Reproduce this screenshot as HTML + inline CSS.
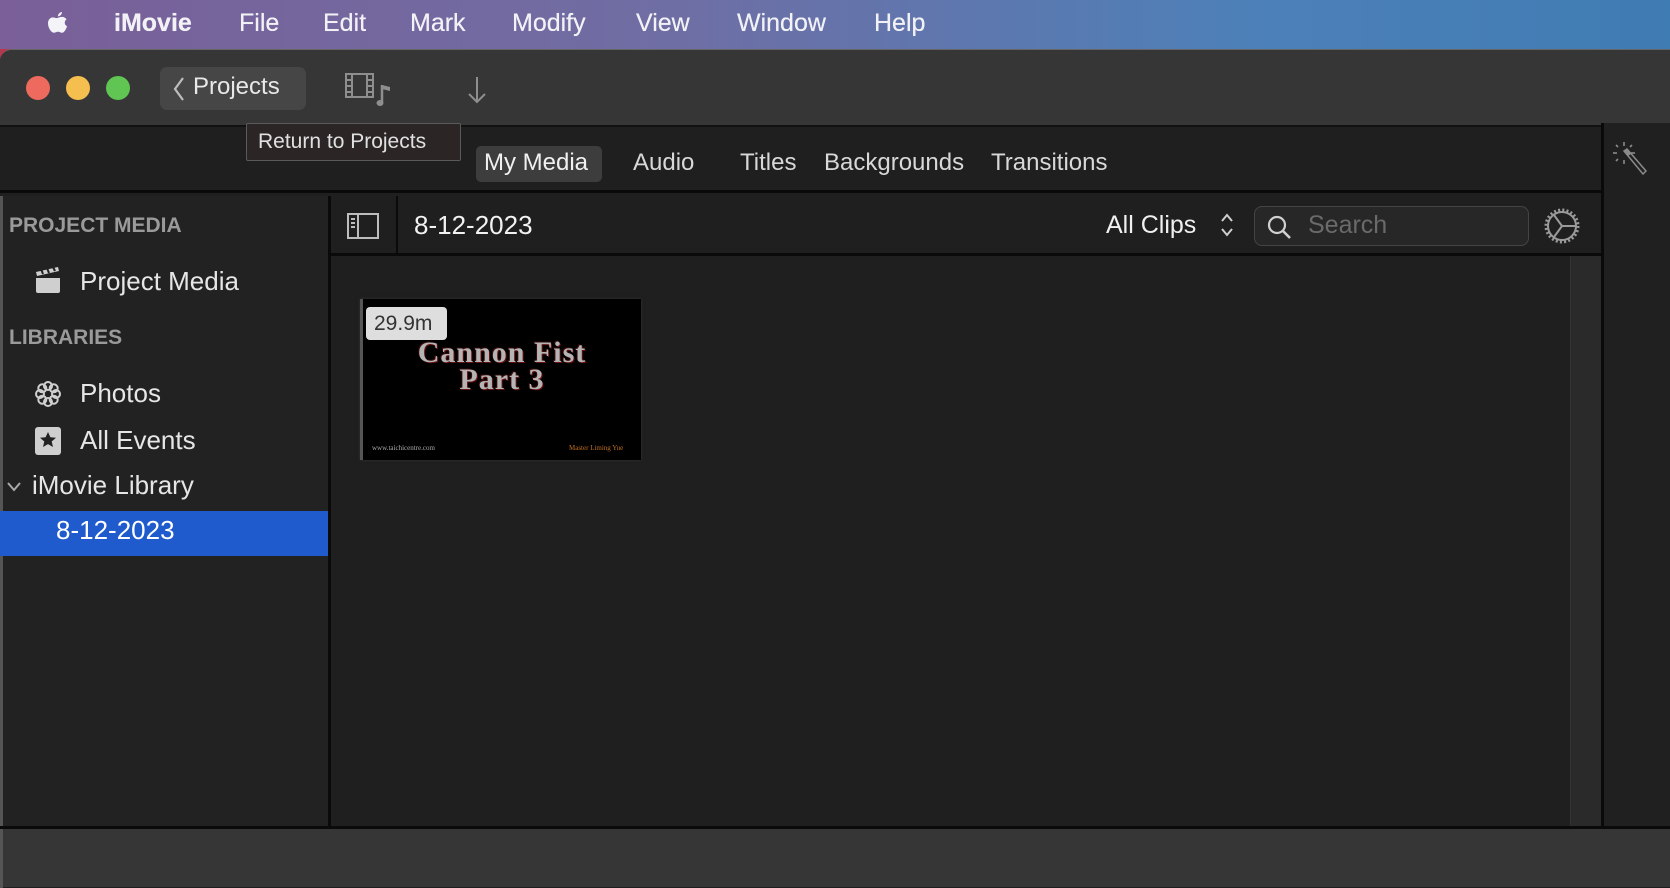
<!DOCTYPE html>
<html><head><meta charset="utf-8"><style>
*{margin:0;padding:0;box-sizing:border-box}
body{width:1670px;height:888px;overflow:hidden;background:#b8374f;font-family:"Liberation Sans",sans-serif;position:relative}
.a{position:absolute}
.menu{left:0;top:0;width:1670px;height:49px;background:linear-gradient(90deg,#7a5f98 0%,#6f6ea4 40%,#4d80b8 75%,#3f7cb3 100%)}
.mi{top:9px;font-size:25px;color:#f2f2f6;white-space:nowrap;text-shadow:0 0 .4px #fff}
.win{left:0;top:49px;width:1670px;height:839px;background:#1f1f1f;border-radius:12px 0 0 0;overflow:hidden;border-top:1px solid #666}
.t{color:#e6e6e6;white-space:nowrap}
</style></head><body>
<div class="a menu">
  <svg class="a" style="left:44px;top:10px" width="26" height="28" viewBox="0 0 26 28"><path d="M18 2c0 2-1.6 4.2-4 4.4C13.8 4.2 15.6 2.2 18 2zM13 8c1.5 0 3-1.1 5-1.1 2 0 3.6 1 4.6 2.5-2.6 1.5-2.5 5.6.5 6.8-.8 2.4-2.9 6.6-5 6.6-1.7 0-2.2-1-4.1-1s-2.5 1-4.1 1C7.4 22.8 4 18 4 13.4 4 9.6 6.4 7.4 9 7.4c1.7 0 2.8 1.1 4 .6z" fill="#f4f4f8"/></svg>
  <div class="a mi" style="left:114px;font-weight:bold">iMovie</div>
  <div class="a mi" style="left:239px">File</div>
  <div class="a mi" style="left:323px">Edit</div>
  <div class="a mi" style="left:410px">Mark</div>
  <div class="a mi" style="left:512px">Modify</div>
  <div class="a mi" style="left:636px">View</div>
  <div class="a mi" style="left:737px">Window</div>
  <div class="a mi" style="left:874px">Help</div>
</div>
<div class="a win">
  <!-- toolbar -->
  <div class="a" style="left:0;top:0;width:1670px;height:77px;background:#363636;border-bottom:2px solid #111"></div>
  <div class="a" style="left:26px;top:26px;width:24px;height:24px;border-radius:50%;background:#ee6a5e"></div>
  <div class="a" style="left:66px;top:26px;width:24px;height:24px;border-radius:50%;background:#f5bf4f"></div>
  <div class="a" style="left:106px;top:26px;width:24px;height:24px;border-radius:50%;background:#61c554"></div>
  <div class="a" style="left:160px;top:17px;width:146px;height:43px;border-radius:7px;background:#464646"></div>
  <svg class="a" style="left:172px;top:26px" width="14" height="26" viewBox="0 0 14 26"><path d="M11 2 3 13l8 11" stroke="#bdbdbd" stroke-width="2.2" fill="none"/></svg>
  <div class="a t" style="left:193px;top:23px;font-size:24px;color:#e8e8e8">Projects</div>
  <svg class="a" style="left:345px;top:23px" width="50" height="34" viewBox="0 0 50 34"><g stroke="#8e8e8e" stroke-width="2" fill="none"><rect x="1" y="1" width="27" height="23"/><line x1="7" y1="1" x2="7" y2="24"/><line x1="22" y1="1" x2="22" y2="24"/><line x1="1" y1="7" x2="7" y2="7"/><line x1="1" y1="13" x2="7" y2="13"/><line x1="1" y1="19" x2="7" y2="19"/><line x1="22" y1="7" x2="28" y2="7"/><line x1="22" y1="13" x2="28" y2="13"/><line x1="22" y1="19" x2="28" y2="19"/></g><path d="M37 12v17" stroke="#8e8e8e" stroke-width="2.5"/><path d="M37 12l8 2v4l-8-2z" fill="#8e8e8e"/><ellipse cx="35" cy="30" rx="3.5" ry="3" fill="#8e8e8e"/></svg>
  <svg class="a" style="left:466px;top:26px" width="22" height="28" viewBox="0 0 22 28"><path d="M11 1v25M3 18l8 8 8-8" stroke="#8e8e8e" stroke-width="2" fill="none"/></svg>
  <!-- tab bar -->
  <div class="a" style="left:0;top:79px;width:1602px;height:64px;background:#1f1f1f;border-bottom:3px solid #0a0a0a"></div>
  <div class="a" style="left:476px;top:96px;width:126px;height:36px;border-radius:5px;background:#3d3d3d"></div>
  <div class="a t" style="left:484px;top:99px;font-size:24px;color:#f0f0f0">My Media</div>
  <div class="a t" style="left:633px;top:99px;font-size:24px;color:#d8d8d8">Audio</div>
  <div class="a t" style="left:740px;top:99px;font-size:24px;color:#d8d8d8">Titles</div>
  <div class="a t" style="left:824px;top:99px;font-size:24px;color:#d8d8d8">Backgrounds</div>
  <div class="a t" style="left:991px;top:99px;font-size:24px;color:#d8d8d8">Transitions</div>
  <!-- tooltip -->
  <div class="a" style="left:246px;top:73px;width:215px;height:38px;background:#2b2525;border:1px solid #5a5a5a;border-radius:2px"></div>
  <div class="a t" style="left:258px;top:80px;font-size:21px;color:#e0e0e0">Return to Projects</div>
  <!-- right strip -->
  <div class="a" style="left:1601px;top:73px;width:3px;height:706px;background:#0a0a0a"></div>
  <div class="a" style="left:1604px;top:73px;width:66px;height:706px;background:#202020"></div>
  <svg class="a" style="left:1610px;top:88px" width="44" height="44" viewBox="0 0 44 44"><g stroke="#8a8a8a" stroke-width="1.6"><line x1="14" y1="4" x2="14" y2="8"/><line x1="3" y1="15" x2="7" y2="15"/><line x1="21" y1="15" x2="25" y2="15"/><line x1="6" y1="7" x2="8" y2="9"/><line x1="22" y1="7" x2="20" y2="9"/><line x1="6" y1="23" x2="8" y2="21"/><line x1="14" y1="22" x2="14" y2="26"/></g><path d="M14 13l3-2 19 22-3 3z" stroke="#8a8a8a" stroke-width="1.5" fill="none"/><path d="M14 13l3-2 4 5-3 2z" fill="#8a8a8a"/></svg>
  <!-- sidebar -->
  <div class="a" style="left:0;top:146px;width:328px;height:632px;background:#222"></div>
  <div class="a" style="left:0;top:146px;width:3px;height:742px;background:#555"></div>
  <div class="a" style="left:328px;top:146px;width:3px;height:632px;background:#0a0a0a"></div>
  <div class="a t" style="left:9px;top:164px;font-size:21px;font-weight:bold;color:#9a9a9a">PROJECT MEDIA</div>
  <svg class="a" style="left:34px;top:216px" width="28" height="28" viewBox="0 0 28 28"><path d="M2 12h24v13a2 2 0 0 1-2 2H4a2 2 0 0 1-2-2z" fill="#cfcfcf"/><path d="M2 6l22-5 1 4-22 5z" fill="#cfcfcf"/><g stroke="#222" stroke-width="2"><line x1="7" y1="3" x2="9" y2="8"/><line x1="13" y1="2" x2="15" y2="7"/><line x1="19" y1="1" x2="21" y2="5"/></g></svg>
  <div class="a t" style="left:80px;top:216px;font-size:26px">Project Media</div>
  <div class="a t" style="left:9px;top:276px;font-size:21px;font-weight:bold;color:#9a9a9a">LIBRARIES</div>
  <svg class="a" style="left:34px;top:330px" width="28" height="28" viewBox="0 0 28 28"><g fill="none" stroke="#cfcfcf" stroke-width="2"><circle cx="14" cy="6" r="4"/><circle cx="14" cy="22" r="4"/><circle cx="6" cy="14" r="4"/><circle cx="22" cy="14" r="4"/><circle cx="8.3" cy="8.3" r="4"/><circle cx="19.7" cy="8.3" r="4"/><circle cx="8.3" cy="19.7" r="4"/><circle cx="19.7" cy="19.7" r="4"/></g></svg>
  <div class="a t" style="left:80px;top:328px;font-size:26px">Photos</div>
  <svg class="a" style="left:34px;top:376px" width="28" height="30" viewBox="0 0 28 30"><rect x="1" y="1" width="26" height="28" rx="3" fill="#cfcfcf"/><path d="M14 6l2.4 5.3 5.6.5-4.3 3.7 1.3 5.5L14 18.1 9 21l1.3-5.5L6 11.8l5.6-.5z" fill="#222"/></svg>
  <div class="a t" style="left:80px;top:375px;font-size:26px">All Events</div>
  <svg class="a" style="left:6px;top:431px" width="16" height="12" viewBox="0 0 16 12"><path d="M2 2l6 7 6-7" stroke="#aaa" stroke-width="2" fill="none"/></svg>
  <div class="a t" style="left:32px;top:420px;font-size:26px">iMovie Library</div>
  <div class="a" style="left:0;top:461px;width:328px;height:45px;background:#1f5bcc"></div>
  <div class="a t" style="left:56px;top:465px;font-size:26px;color:#fff">8-12-2023</div>
  <!-- header row -->
  <div class="a" style="left:331px;top:146px;width:1270px;height:60px;background:#1f1f1f;border-bottom:3px solid #0a0a0a"></div>
  <svg class="a" style="left:347px;top:163px" width="32" height="26" viewBox="0 0 32 26"><rect x="1" y="1" width="30" height="24" stroke="#bdbdbd" stroke-width="2" fill="none"/><line x1="11" y1="1" x2="11" y2="25" stroke="#bdbdbd" stroke-width="2"/><g stroke="#bdbdbd" stroke-width="2"><line x1="4" y1="6" x2="8" y2="6"/><line x1="4" y1="10" x2="8" y2="10"/><line x1="4" y1="14" x2="8" y2="14"/></g></svg>
  <div class="a" style="left:396px;top:146px;width:2px;height:58px;background:#0a0a0a"></div>
  <div class="a t" style="left:414px;top:160px;font-size:26px;color:#f2f2f2">8-12-2023</div>
  <div class="a t" style="left:1106px;top:161px;font-size:25px;color:#f0f0f0">All Clips</div>
  <svg class="a" style="left:1219px;top:162px" width="16" height="26" viewBox="0 0 16 26"><path d="M3 9l5-6 5 6M3 17l5 6 5-6" stroke="#cfcfcf" stroke-width="2" fill="none"/></svg>
  <div class="a" style="left:1254px;top:156px;width:275px;height:40px;border-radius:8px;background:#272727;border:1px solid #444"></div>
  <svg class="a" style="left:1266px;top:164px" width="28" height="28" viewBox="0 0 28 28"><circle cx="11" cy="11" r="8" stroke="#d0d0d0" stroke-width="2.2" fill="none"/><line x1="17" y1="17" x2="24" y2="24" stroke="#d0d0d0" stroke-width="2.6"/></svg>
  <div class="a t" style="left:1308px;top:161px;font-size:25px;color:#6a6a6a">Search</div>
  <svg class="a" style="left:1543px;top:157px" width="38" height="38" viewBox="0 0 38 38"><circle cx="19" cy="19" r="14" stroke="#9a9a9a" stroke-width="2" fill="none"/><circle cx="19" cy="19" r="16" stroke="#9a9a9a" stroke-width="3" fill="none" stroke-dasharray="2 2.2"/><path d="M19 19L11 8M19 19h13M19 19l-8 11" stroke="#9a9a9a" stroke-width="2"/></svg>
  <!-- content -->
  <div class="a" style="left:1570px;top:206px;width:31px;height:572px;background:#2a2a2a;border-left:1px solid #333"></div>
  <div class="a" style="left:360px;top:249px;width:281px;height:161px;background:#000;border-left:3px solid #555;box-shadow:0 0 3px #333"></div>
  <div class="a" style="left:363px;top:289px;width:278px;text-align:center;font-family:'Liberation Serif',serif;font-weight:bold;font-size:30px;letter-spacing:1px;line-height:27px;color:#b4b4b4;text-shadow:1px 1px 0 #6a1010,-1px -1px 0 #3a0a0a">Cannon Fist<br>Part 3</div>
  <div class="a" style="left:372px;top:394px;font-family:'Liberation Serif',serif;font-size:7px;color:#aaa">www.taichicentre.com</div>
  <div class="a" style="left:569px;top:394px;font-family:'Liberation Serif',serif;font-size:7px;color:#c07020">Master Liming Yue</div>
  <div class="a" style="left:366px;top:257px;width:81px;height:33px;border-radius:4px;background:#dedede"></div>
  <div class="a" style="left:374px;top:262px;font-size:21px;color:#333">29.9m</div>
  <!-- bottom -->
  <div class="a" style="left:0;top:776px;width:1670px;height:3px;background:#0a0a0a"></div>
  <div class="a" style="left:3px;top:779px;width:1667px;height:58px;background:#363636"></div>
</div>
</body></html>
